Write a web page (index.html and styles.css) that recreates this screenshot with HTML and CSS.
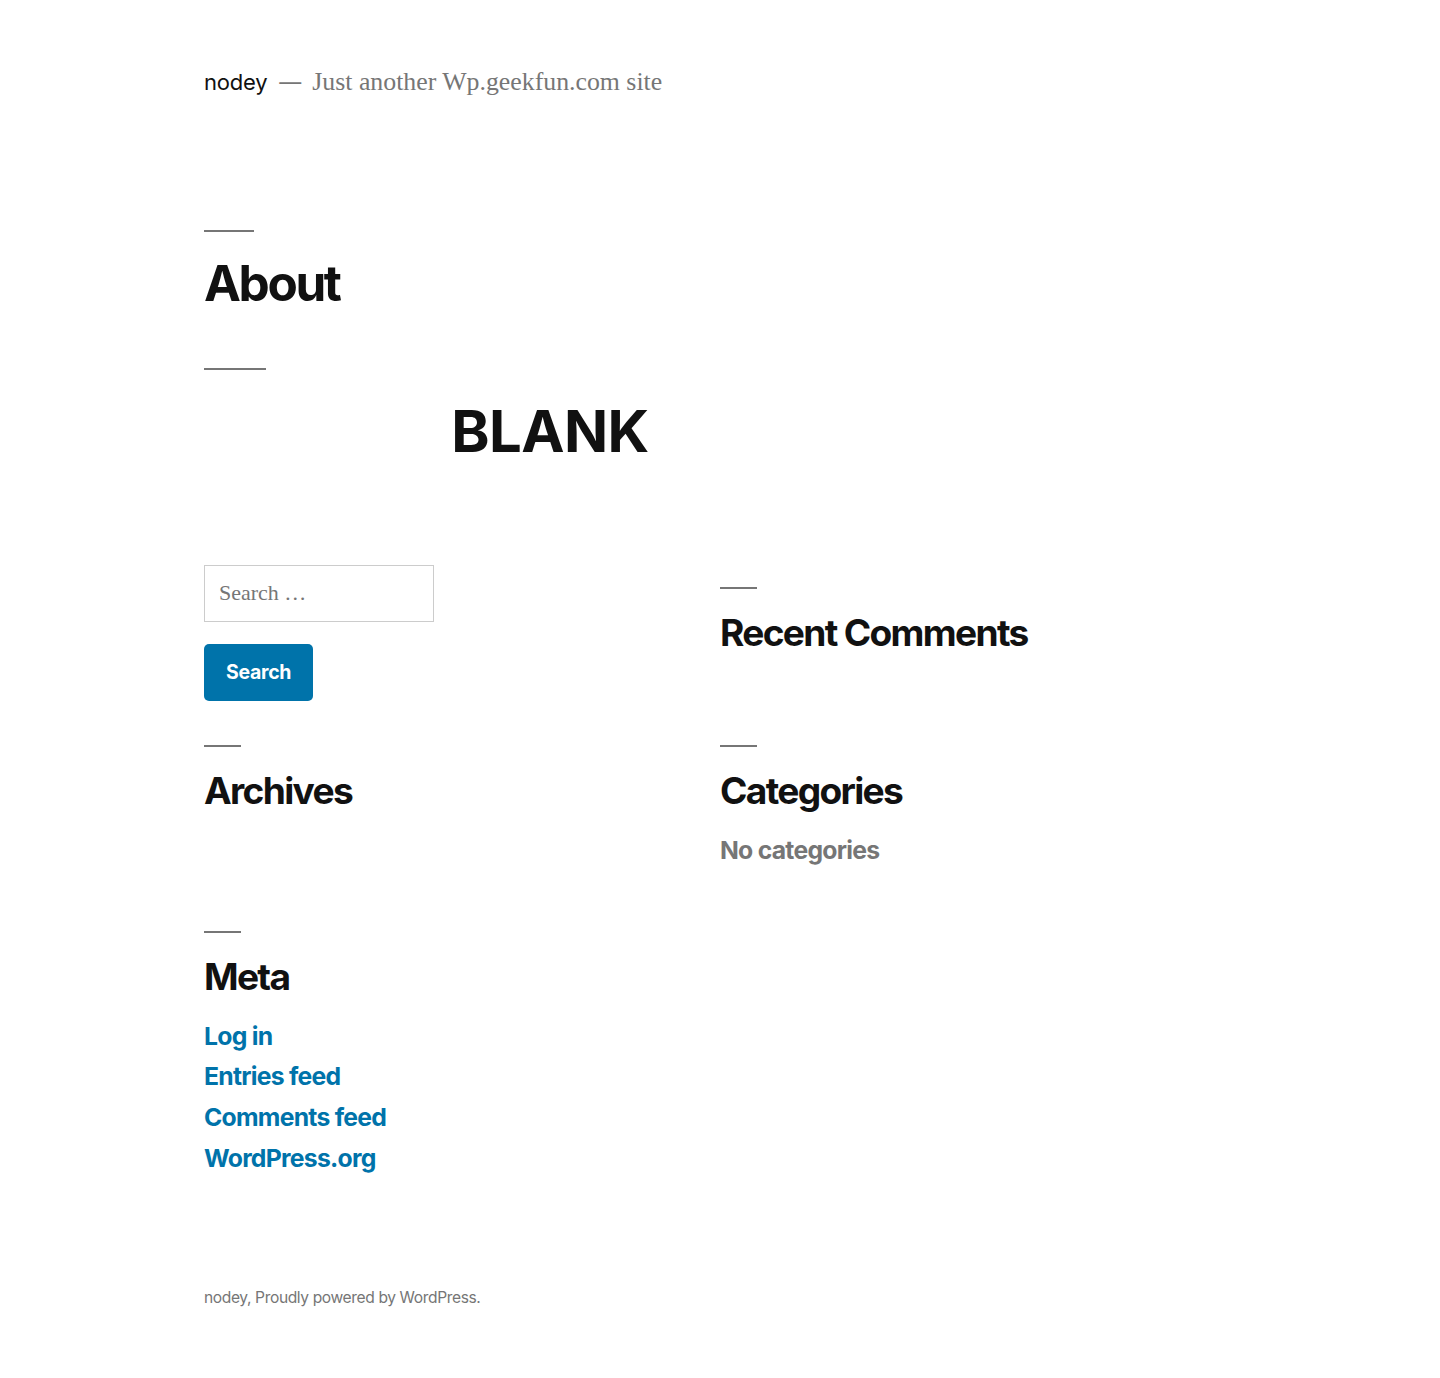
FILE: index.html
```html
<!DOCTYPE html>
<html lang="en">
<head>
<meta charset="utf-8">
<title>About – nodey</title>
<link rel="stylesheet" href="styles.css">
</head>
<body>
<header class="site-header">
  <div class="branding">
    <p class="site-title"><a href="#">nodey</a></p>
    <span class="sep">—</span>
    <p class="site-description">Just another Wp.geekfun.com site</p>
  </div>
</header>
<main class="site-main">
  <article class="entry">
    <h1 class="entry-title">About</h1>
    <div class="entry-content">
      <hr class="separator">
      <h1 class="blank">BLANK</h1>
    </div>
  </article>
</main>
<aside class="widget-area">
  <section class="widget widget-search">
    <form class="search-form">
      <input class="search-field" type="search" placeholder="Search …">
      <button class="search-submit" type="button">Search</button>
    </form>
  </section>
  <section class="widget">
    <h2 class="widget-title">Recent Comments</h2>
  </section>
  <section class="widget">
    <h2 class="widget-title">Archives</h2>
  </section>
  <section class="widget">
    <h2 class="widget-title">Categories</h2>
    <ul class="widget-list">
      <li class="muted">No categories</li>
    </ul>
  </section>
  <section class="widget">
    <h2 class="widget-title">Meta</h2>
    <ul class="widget-list">
      <li><a href="#">Log in</a></li>
      <li><a href="#">Entries feed</a></li>
      <li><a href="#">Comments feed</a></li>
      <li><a href="#">WordPress.org</a></li>
    </ul>
  </section>
</aside>
<footer class="site-footer">
  <span class="site-info">nodey, Proudly powered by WordPress.</span>
</footer>
</body>
</html>
```
FILE: styles.css
```css
html, body {
  margin: 0;
  padding: 0;
  background: #fff;
}
body {
  font-family: Inter, "Liberation Sans", sans-serif;
  font-size: 22px;
  color: #111;
}
a {
  text-decoration: none;
  color: inherit;
}

.site-header {
  padding: 67px 204px 0;
}
.branding {
  display: flex;
  align-items: baseline;
}
.site-title {
  margin: 0;
  font-size: 22px;
  line-height: 1.2;
  font-weight: 400;
  color: #111;
  letter-spacing: -0.01em;
}
.sep {
  color: #767676;
  font-size: 22px;
  margin: 0 11px 0 12px;
}
.site-description {
  margin: 0;
  font-family: "Liberation Serif", serif;
  font-size: 25.8px;
  color: #767676;
}

.site-main {
  padding: 0 204px;
  margin-top: 133px;
}
.entry-title {
  margin: 0;
  font-size: 49.5px;
  line-height: 1.2;
  font-weight: 700;
  letter-spacing: -0.048em;
}
.entry-title::before {
  content: "";
  display: block;
  width: 50px;
  height: 2px;
  background: #767676;
  margin-bottom: 22px;
}
.entry-content {
  width: 692px;
}
.separator {
  border: 0;
  height: 2px;
  width: 62px;
  background: #767676;
  margin: 55px 0 27px 0;
}
.blank {
  margin: 0;
  text-align: center;
  font-size: 58px;
  line-height: 1.2;
  font-weight: 700;
  letter-spacing: -0.01em;
}

.widget-area {
  display: grid;
  grid-template-columns: 516px 516px;
  align-items: start;
  margin: 98px 204px 0;
}
.widget {
  margin-bottom: 22px;
}
.widget-title {
  margin: 0;
  font-size: 37.125px;
  line-height: 1.2;
  font-weight: 700;
  letter-spacing: -0.045em;
}
.widget-title::before {
  content: "";
  display: block;
  width: 37px;
  height: 2px;
  background: #767676;
  margin: 22px 0;
}
.search-form {
  display: flex;
  flex-direction: column;
  align-items: flex-start;
  gap: 22px;
}
.search-field {
  box-sizing: border-box;
  width: 230px;
  height: 57px;
  border: 1px solid #ccc;
  border-radius: 0;
  padding: 0 14px;
  font-family: "Liberation Serif", serif;
  font-size: 22px;
  color: #111;
  background: #fff;
  outline: none;
}
.search-field::placeholder {
  color: #767676;
}
.search-submit {
  box-sizing: border-box;
  height: 57px;
  padding: 0 22px;
  border: 0;
  border-radius: 5px;
  background: #0073aa;
  color: #fff;
  font-family: Inter, "Liberation Sans", sans-serif;
  font-size: 19.5px;
  font-weight: 700;
  letter-spacing: -0.015em;
}
.widget-list {
  list-style: none;
  margin: 22px 0;
  padding: 0;
}
.widget-list li {
  font-size: 24.75px;
  line-height: 1.2;
  font-weight: 700;
  color: #0073aa;
  letter-spacing: -0.03em;
}
.widget-list li + li {
  margin-top: 11px;
}
.widget-list li.muted {
  color: #767676;
}

.site-footer {
  padding: 64px 204px 68px;
}
.site-info {
  font-size: 15.6px;
  line-height: 1.6;
  color: #767676;
  letter-spacing: -0.025em;
}
```
